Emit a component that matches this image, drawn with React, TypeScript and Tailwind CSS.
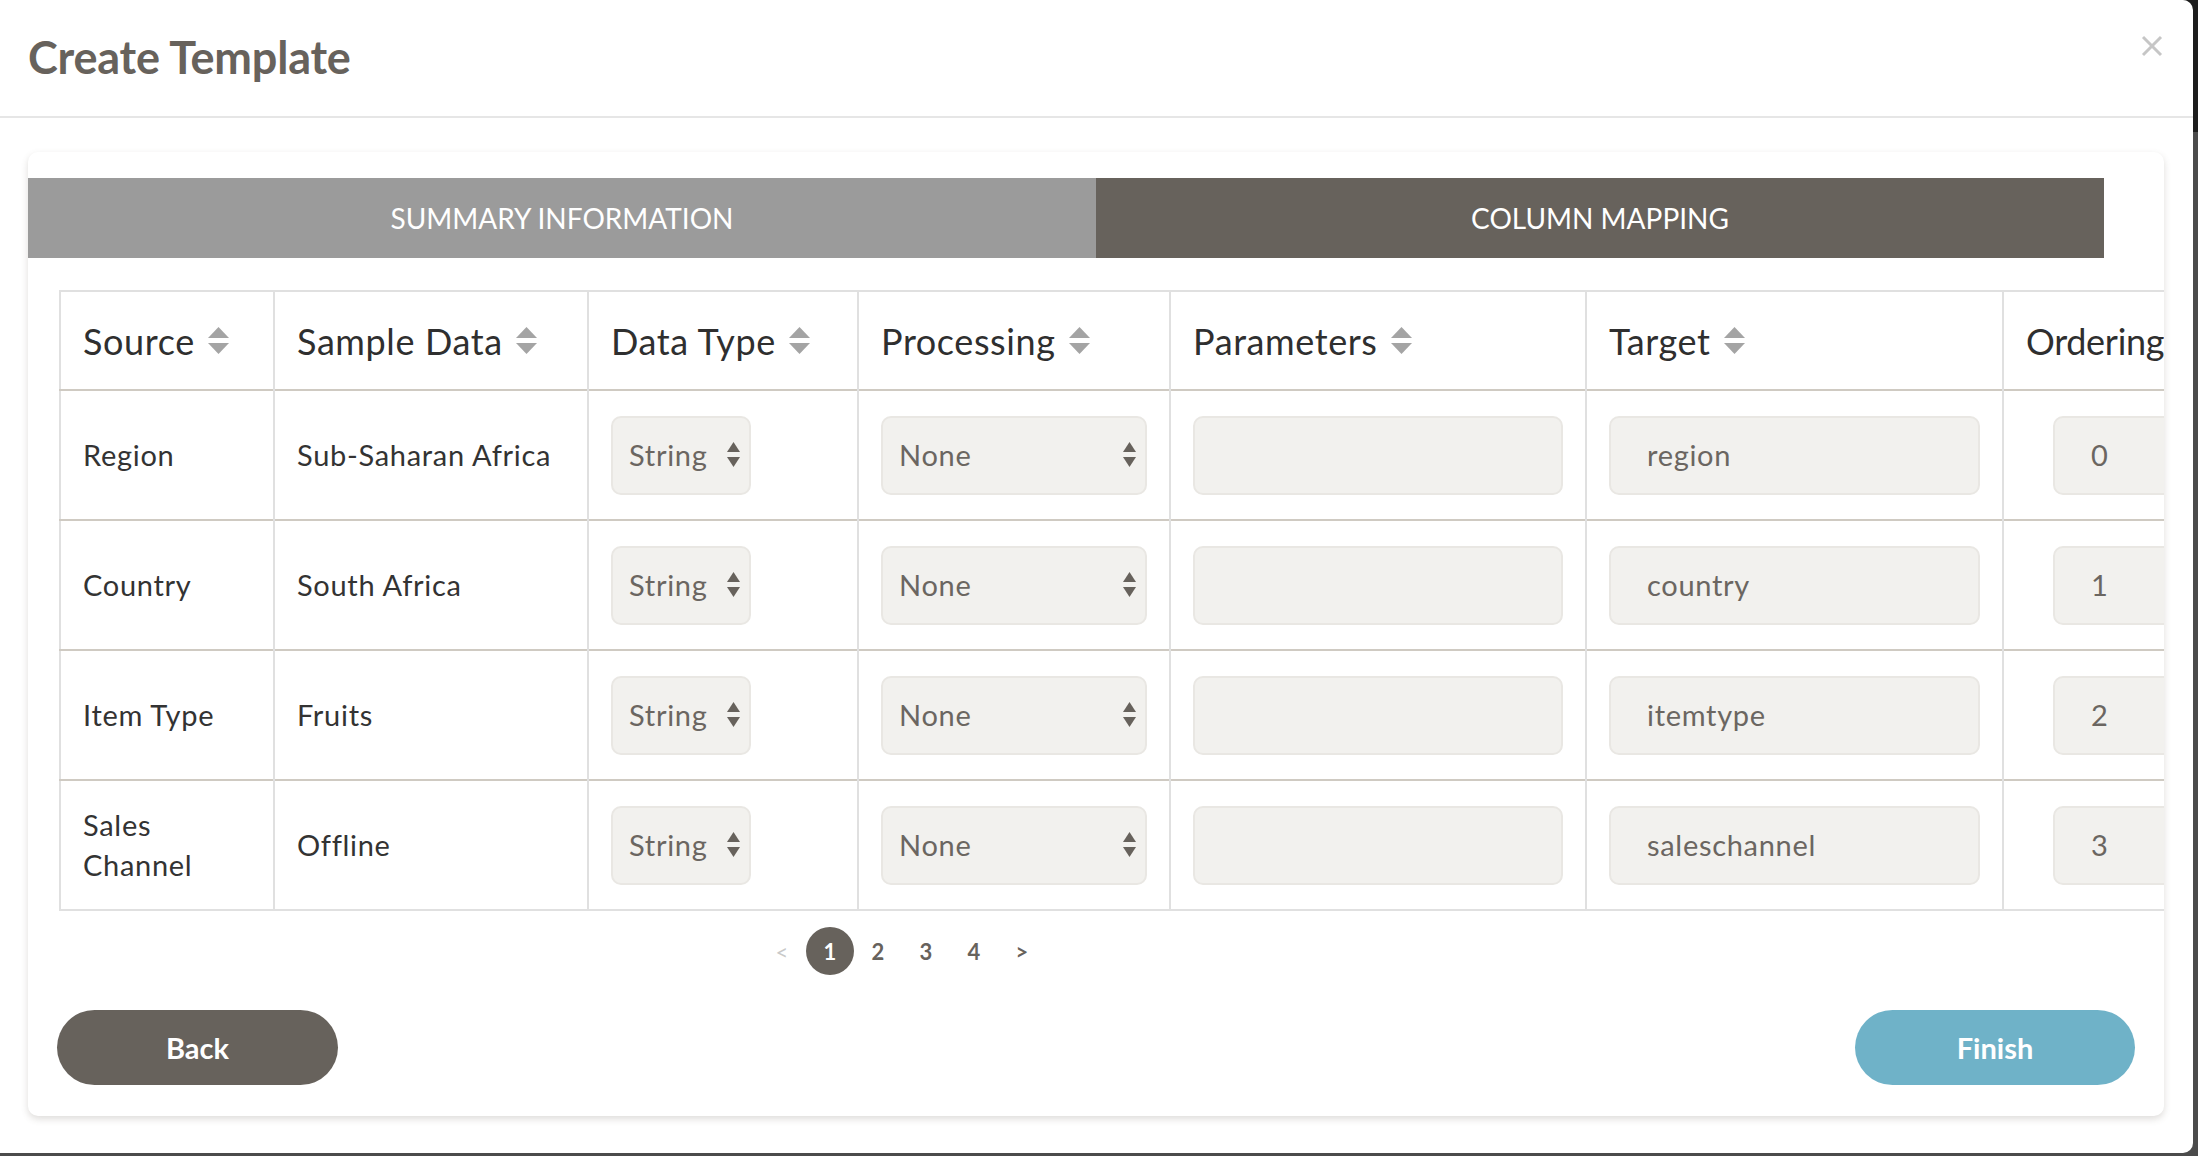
import React from "react";

const SortIcon = () => (
  <svg width="21" height="28" viewBox="0 0 21 28" className="shrink-0">
    <polygon points="10.5,0 21,11 0,11" fill="#a4a4a4" />
    <polygon points="0,16 21,16 10.5,27" fill="#a4a4a4" />
  </svg>
);

const SelectArrow = () => (
  <svg width="13" height="26" viewBox="0 0 13 26" className="shrink-0">
    <polygon points="6.5,0 13,10 0,10" fill="#67625c" />
    <polygon points="0,15 13,15 6.5,25" fill="#67625c" />
  </svg>
);

const rows = [
  { source: ["Region"], sample: "Sub-Saharan Africa", target: "region", order: "0" },
  { source: ["Country"], sample: "South Africa", target: "country", order: "1" },
  { source: ["Item Type"], sample: "Fruits", target: "itemtype", order: "2" },
  { source: ["Sales", "Channel"], sample: "Offline", target: "saleschannel", order: "3" },
];

const headers = [
  { label: "Source", w: "w-[214px]", sort: true, track: "tracking-[0.6px]" },
  { label: "Sample Data", w: "w-[314px]", sort: true, track: "tracking-[0.6px]" },
  { label: "Data Type", w: "w-[270px]", sort: true, track: "tracking-[0.6px]" },
  { label: "Processing", w: "w-[312px]", sort: true, track: "tracking-[0.6px]" },
  { label: "Parameters", w: "w-[416px]", sort: true, track: "tracking-[0.6px]" },
  { label: "Target", w: "w-[417px]", sort: true, track: "tracking-[0.6px]" },
  { label: "Ordering", w: "w-[300px]", sort: false, track: "tracking-[-0.3px]" },
];

export default function App() {
  return (
    <div className="relative w-[2198px] h-[1156px] overflow-hidden bg-[#4b4b4b] font-['Lato',sans-serif]">
      <div className="absolute right-0 top-0 w-[12px] h-[132px] bg-[#1d1d1d]" />
      <div className="relative w-[2193px] h-[1153px] bg-white rounded-r-[10px] flex flex-col">
        {/* header */}
        <div className="h-[118px] shrink-0 border-b-2 border-[#e6e6e6] flex items-center justify-between pl-[28px] pr-[30px]">
          <h1 className="text-[45px] font-bold text-[#67625c] tracking-[-0.2px]">Create Template</h1>
          <svg width="22" height="22" viewBox="0 0 22 22" className="mb-[24px]">
            <line x1="2" y1="2" x2="20" y2="20" stroke="#c6c6c6" strokeWidth="3" />
            <line x1="20" y1="2" x2="2" y2="20" stroke="#c6c6c6" strokeWidth="3" />
          </svg>
        </div>

        {/* body */}
        <div className="pt-[34px] pl-[28px] pr-[29px]">
          <div className="h-[964px] bg-white rounded-[10px] shadow-[0_3px_7px_rgba(90,80,70,0.2)] overflow-hidden pt-[26px] flex flex-col">
            {/* tabs */}
            <div className="flex w-[2076px] h-[80px] shrink-0">
              <div className="w-[1068px] bg-[#9b9b9b] flex items-center justify-center text-white text-[28px] uppercase">
                Summary Information
              </div>
              <div className="flex-1 bg-[#67625c] flex items-center justify-center text-white text-[28px] uppercase">
                Column Mapping
              </div>
            </div>

            {/* table */}
            <div className="mt-[32px] pl-[31px]">
              <table className="table-fixed border-collapse w-[2243px] border-t-2 border-l-2 border-b-2 border-[#e0e0e0]">
                <thead>
                  <tr className="h-[99px] border-b-2 border-[#cfcac2]">
                    {headers.map((h) => (
                      <th key={h.label} className={`${h.w} border-r-2 border-[#e0e0e0] px-[22px] text-left font-normal`}>
                        <div className={`flex items-center gap-[13px] text-[36px] ${h.track} text-[#2f2f2f] whitespace-nowrap`}>
                          <span>{h.label}</span>
                          {h.sort && <SortIcon />}
                        </div>
                      </th>
                    ))}
                  </tr>
                </thead>
                <tbody className="text-[29px] tracking-[0.7px]">
                  {rows.map((r, i) => (
                    <tr key={i} className={`h-[130px] ${i < rows.length - 1 ? "border-b-2 border-[#cfcac2]" : ""}`}>
                      <td className="border-r-2 border-[#e0e0e0] px-[22px] text-[#333333] leading-[40px]">
                        {r.source.map((s) => (
                          <div key={s}>{s}</div>
                        ))}
                      </td>
                      <td className="border-r-2 border-[#e0e0e0] px-[22px] text-[#333333]">{r.sample}</td>
                      <td className="border-r-2 border-[#e0e0e0] px-[22px]">
                        <div className="w-[140px] h-[79px] rounded-[10px] bg-[#f2f1ee] border-2 border-[#e9e7e3] flex items-center justify-between pl-[16px] pr-[9px] text-[#6b6661]">
                          <span>String</span>
                          <SelectArrow />
                        </div>
                      </td>
                      <td className="border-r-2 border-[#e0e0e0] px-[22px]">
                        <div className="w-full h-[79px] rounded-[10px] bg-[#f2f1ee] border-2 border-[#e9e7e3] flex items-center justify-between pl-[16px] pr-[9px] text-[#6b6661]">
                          <span>None</span>
                          <SelectArrow />
                        </div>
                      </td>
                      <td className="border-r-2 border-[#e0e0e0] px-[22px]">
                        <div className="w-full h-[79px] rounded-[10px] bg-[#f2f1ee] border-2 border-[#e9e7e3]" />
                      </td>
                      <td className="border-r-2 border-[#e0e0e0] px-[22px]">
                        <div className="w-full h-[79px] rounded-[10px] bg-[#f2f1ee] border-2 border-[#e9e7e3] flex items-center pl-[36px] text-[#6b6661]">
                          {r.target}
                        </div>
                      </td>
                      <td className="border-r-2 border-[#e0e0e0] pl-[49px] pr-[22px]">
                        <div className="w-[200px] h-[79px] rounded-[10px] bg-[#f2f1ee] border-2 border-[#e9e7e3] flex items-center pl-[36px] text-[#6b6661]">
                          {r.order}
                        </div>
                      </td>
                    </tr>
                  ))}
                </tbody>
              </table>
            </div>

            {/* pagination */}
            <div className="mt-[16px] ml-[730px] flex items-center h-[48px] text-[22px]">
              <div className="w-[48px] flex justify-center text-[#c9c9c9]">&lt;</div>
              <div className="w-[48px] h-[48px] rounded-full bg-[#67625c] text-white font-bold flex items-center justify-center">1</div>
              <div className="w-[48px] flex justify-center text-[#67625c] font-bold">2</div>
              <div className="w-[48px] flex justify-center text-[#67625c] font-bold">3</div>
              <div className="w-[48px] flex justify-center text-[#67625c] font-bold">4</div>
              <div className="w-[48px] flex justify-center text-[#67625c] font-bold">&gt;</div>
            </div>

            {/* buttons */}
            <div className="mt-[35px] px-[29px] flex justify-between">
              <button className="w-[281px] h-[75px] rounded-full bg-[#67625c] text-white text-[29px] font-bold">Back</button>
              <button className="w-[280px] h-[75px] rounded-full bg-[#6fb2c8] text-white text-[29px] font-bold">Finish</button>
            </div>
          </div>
        </div>
      </div>
    </div>
  );
}
